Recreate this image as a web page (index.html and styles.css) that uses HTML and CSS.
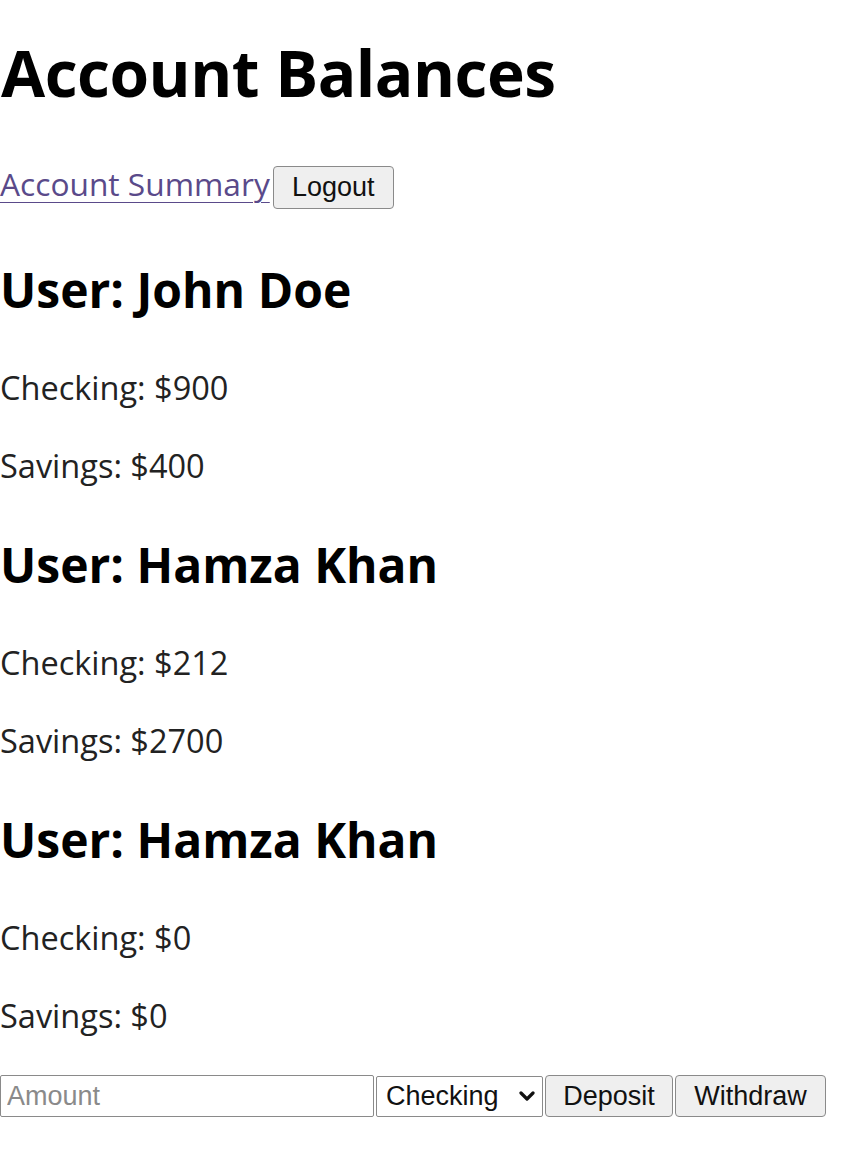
FILE: index.html
```html
<!DOCTYPE html>
<html lang="en">
<head>
<meta charset="utf-8">
<title>Account Balances</title>
<link rel="stylesheet" href="styles.css">
</head>
<body>
<h1 class="title">Account Balances</h1>
<nav class="nav">
  <a class="nav-link" href="#">Account Summary</a>
  <button class="btn btn-logout" type="button">Logout</button>
</nav>
<section class="user">
  <h2 class="user-name">User: John Doe</h2>
  <p class="balance">Checking: $900</p>
  <p class="balance">Savings: $400</p>
</section>
<section class="user">
  <h2 class="user-name">User: Hamza Khan</h2>
  <p class="balance">Checking: $212</p>
  <p class="balance">Savings: $2700</p>
</section>
<section class="user">
  <h2 class="user-name">User: Hamza Khan</h2>
  <p class="balance">Checking: $0</p>
  <p class="balance">Savings: $0</p>
</section>
<form class="tx-form">
  <input class="amount" type="text" placeholder="Amount">
  <div class="select-wrap">
    <select class="account-select">
      <option>Checking</option>
      <option>Savings</option>
    </select>
    <svg class="chevron" width="16" height="11" viewBox="0 0 16 11"><path d="M2 2 L8 8 L14 2" fill="none" stroke="#111" stroke-width="3.2" stroke-linecap="round" stroke-linejoin="round"/></svg>
  </div>
  <button class="btn btn-deposit" type="button">Deposit</button>
  <button class="btn btn-withdraw" type="button">Withdraw</button>
</form>
</body>
</html>
```
FILE: styles.css
```css
html, body {
  margin: 0;
  padding: 0;
  background: #ffffff;
}
body {
  font-family: "Open Sans", "Noto Sans", sans-serif;
  color: #222;
}
.title {
  font-size: 64px;
  line-height: 92px;
  font-weight: 700;
  color: #000;
  margin: 27px 0 0 1px;
  letter-spacing: -0.5px;
}
.nav {
  display: flex;
  align-items: baseline;
  margin: 43px 0 48px 0;
}
.nav-link {
  font-size: 31.7px;
  line-height: 44px;
  color: #5a4a8a;
  text-decoration: underline;
  text-decoration-thickness: 1px;
  text-underline-offset: 6px;
}
.btn {
  font-family: "Liberation Sans", Arial, sans-serif;
  font-size: 27px;
  color: #111;
  background: #efefef;
  border: 1.5px solid #8a8a8a;
  border-radius: 4px;
  height: 43px;
  padding: 0;
  box-sizing: border-box;
}
.btn-logout {
  width: 121px;
  margin-left: 3px;
}
.user-name {
  font-size: 48px;
  line-height: 66px;
  font-weight: 700;
  color: #000;
  margin: 44px 0 43px;
}
.balance {
  font-size: 32.5px;
  line-height: 44px;
  margin: 34px 0;
  color: #222;
}
.tx-form {
  display: flex;
  align-items: center;
  gap: 2px;
  margin-top: 37px;
}
.amount {
  width: 374px;
  height: 42px;
  box-sizing: border-box;
  border: 1.5px solid #8a8a8a;
  border-radius: 2px;
  padding: 0 6px;
  font-family: "Liberation Sans", Arial, sans-serif;
  font-size: 27px;
  color: #111;
}
.amount::placeholder {
  color: #8a8a8a;
}
.select-wrap {
  position: relative;
  width: 167px;
  height: 41px;
}
.account-select {
  appearance: none;
  -webkit-appearance: none;
  width: 100%;
  height: 100%;
  box-sizing: border-box;
  border: 1.5px solid #8a8a8a;
  border-radius: 2px;
  background: #fff;
  padding: 0 0 0 9px;
  font-family: "Liberation Sans", Arial, sans-serif;
  font-size: 27px;
  color: #111;
}
.chevron {
  position: absolute;
  right: 8px;
  top: 15px;
  pointer-events: none;
}
.btn-deposit {
  width: 128px;
  height: 42px;
}
.btn-withdraw {
  width: 151px;
  height: 42px;
}
```
